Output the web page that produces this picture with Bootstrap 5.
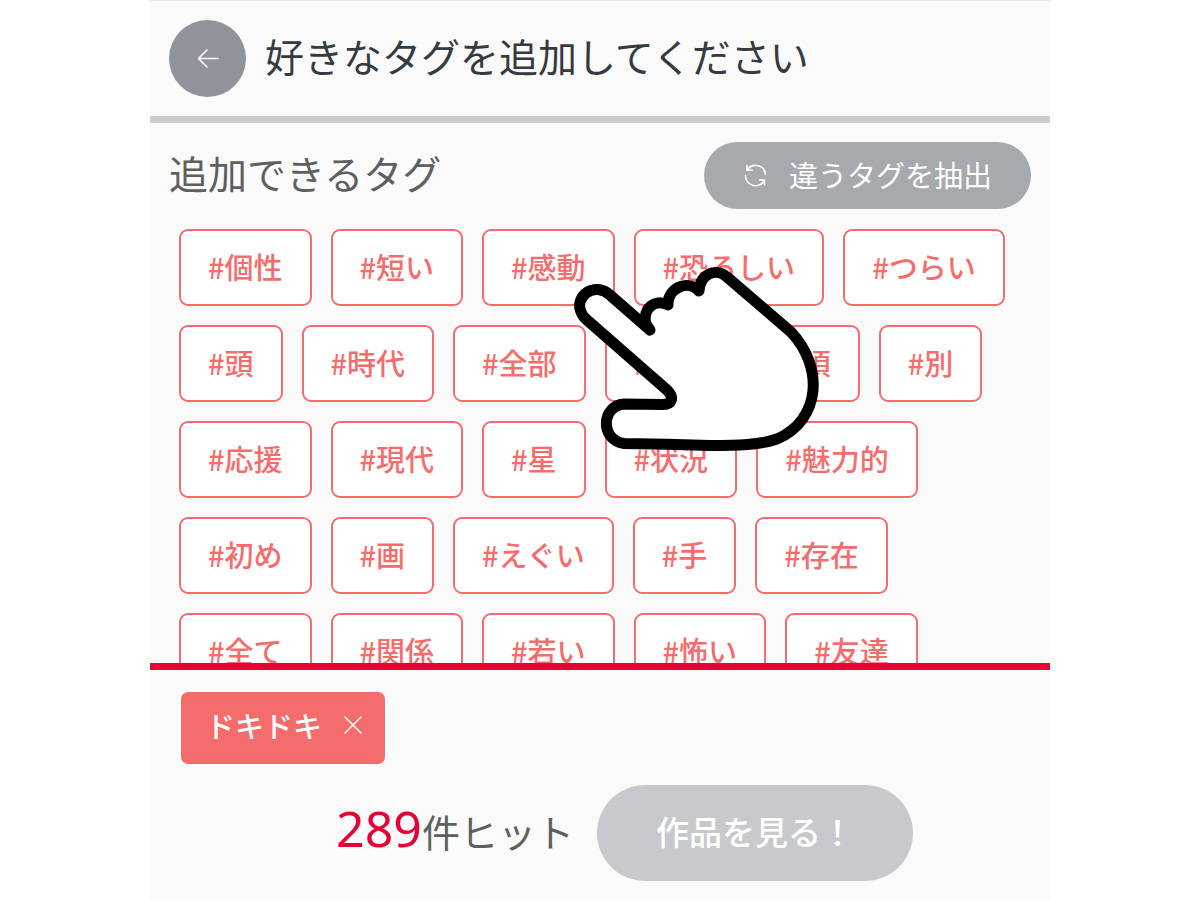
<!DOCTYPE html>
<html lang="ja">
<head>
<meta charset="utf-8">
<meta name="viewport" content="width=device-width, initial-scale=1">
<title>タグ検索</title>
<link href="https://cdn.jsdelivr.net/npm/bootstrap@5.3.0/dist/css/bootstrap.min.css" rel="stylesheet">
<style>
body { font-family: "Noto Sans CJK JP", sans-serif; background: #fff; color: #5f5f5f; }
.app-shell { max-width: 900px; background: #fafafa; }
.app-header { border-top: 1px solid #e8e8e8; border-bottom: 7px solid #ccc; padding: 19px; gap: 19px; }
.back-btn { width: 77px; height: 77px; background: #909399; color: #fff; }
.app-title, .section-title { font-size: 39px; line-height: 56px; font-weight: 400; padding-bottom: 8px; }
.app-title { color: #343a40; }
.tag-area { padding: 19px 19px 0; min-height: 0; }
.shuffle-btn { height: 67px; padding: 0 39px; gap: 21px; background: #a6a9ad; color: #fff; font-size: 29px; line-height: 40px; }
.shuffle-btn span, .picked-tag span { padding-bottom: 4px; }
.tag-list { gap: 19px; padding: 20px 10px 0; }
.tag-btn { height: 77px; padding: 0 27px 4px; border: 2px solid #f56c6c; border-radius: 9px; background: #fff; color: #f56c6c; font-size: 29px; line-height: 40px; font-weight: 500; }
.result-bar { border-top: 7px solid #e60033; padding: 20px 29px 19px; }
.picked-tag { height: 76px; padding: 0 22px 2px 25px; gap: 21px; border: 2px solid #fff; border-radius: 9px; background: #f56c6c; color: #fff; font-size: 29px; line-height: 40px; font-weight: 500; }
.picked-tag svg { margin-bottom: 4px; }
.result-row { gap: 23px; margin-top: 19px; padding-left: 49px; }
.hit-text { font-size: 38px; line-height: 56px; padding-bottom: 8px; }
.hit-count { font-family: "Noto Sans", sans-serif; font-size: 50px; color: #e60033; }
.view-btn { height: 96px; padding: 0 59px 4px; background: #c8c9cc; color: #fff; font-size: 33px; line-height: 48px; font-weight: 500; }
.pointer-hand { left: 420px; top: 260px; pointer-events: none; }
</style>
</head>
<body>
<div class="app-shell container-fluid p-0 vh-100 d-flex flex-column position-relative overflow-hidden">
  <header class="app-header d-flex align-items-center flex-shrink-0">
    <button type="button" class="back-btn btn border-0 rounded-circle p-0 d-flex align-items-center justify-content-center" aria-label="戻る">
      <svg width="24" height="24" viewBox="0 0 24 24" fill="none" stroke="currentColor" stroke-width="1.6" stroke-linecap="round" stroke-linejoin="round"><path d="M22 11.5H2.500M11 3 2.500 11.500 11 20"/></svg>
    </button>
    <h1 class="app-title m-0">好きなタグを追加してください</h1>
  </header>

  <main class="tag-area flex-fill overflow-hidden">
    <div class="d-flex align-items-center justify-content-between">
      <h2 class="section-title m-0">追加できるタグ</h2>
      <button type="button" class="shuffle-btn btn border-0 rounded-pill d-flex align-items-center">
        <svg width="25" height="25" viewBox="0 0 25 25" fill="none" stroke="currentColor" stroke-width="1.6" stroke-linejoin="round" stroke-linecap="round"><path d="M4 2.500v4.800h5M4.500 6.500A10 10 0 0 1 22.500 11.500M21.500 21.800v-4.800h-5M21 18A10 10 0 0 1 2.500 12.500"/></svg>
        <span>違うタグを抽出</span>
      </button>
    </div>
    <div class="tag-list d-flex flex-wrap">
      <button type="button" class="tag-btn btn">#個性</button>
      <button type="button" class="tag-btn btn">#短い</button>
      <button type="button" class="tag-btn btn">#感動</button>
      <button type="button" class="tag-btn btn">#恐ろしい</button>
      <button type="button" class="tag-btn btn">#つらい</button>
      <button type="button" class="tag-btn btn">#頭</button>
      <button type="button" class="tag-btn btn">#時代</button>
      <button type="button" class="tag-btn btn">#全部</button>
      <button type="button" class="tag-btn btn">#最高</button>
      <button type="button" class="tag-btn btn">#頃</button>
      <button type="button" class="tag-btn btn">#別</button>
      <button type="button" class="tag-btn btn">#応援</button>
      <button type="button" class="tag-btn btn">#現代</button>
      <button type="button" class="tag-btn btn">#星</button>
      <button type="button" class="tag-btn btn">#状況</button>
      <button type="button" class="tag-btn btn">#魅力的</button>
      <button type="button" class="tag-btn btn">#初め</button>
      <button type="button" class="tag-btn btn">#画</button>
      <button type="button" class="tag-btn btn">#えぐい</button>
      <button type="button" class="tag-btn btn">#手</button>
      <button type="button" class="tag-btn btn">#存在</button>
      <button type="button" class="tag-btn btn">#全て</button>
      <button type="button" class="tag-btn btn">#関係</button>
      <button type="button" class="tag-btn btn">#若い</button>
      <button type="button" class="tag-btn btn">#怖い</button>
      <button type="button" class="tag-btn btn">#友達</button>
    </div>
  </main>

  <footer class="result-bar flex-shrink-0">
    <button type="button" class="picked-tag btn d-inline-flex align-items-center">
      <span>ドキドキ</span>
      <svg width="20" height="20" viewBox="0 0 20 20" fill="none" stroke="currentColor" stroke-width="1.5" stroke-linecap="round"><path d="m2 2 16 16M18 2 2 18"/></svg>
    </button>
    <div class="result-row d-flex align-items-center justify-content-center">
      <p class="hit-text m-0"><span class="hit-count">289</span>件ヒット</p>
      <button type="button" class="view-btn btn border-0 rounded-pill">作品を見る！</button>
    </div>
  </footer>

  <svg class="pointer-hand position-absolute" width="252" height="196" viewBox="570 260 252 196" fill="#fff" stroke="#000" stroke-width="11" stroke-linecap="round" stroke-linejoin="round" aria-hidden="true">
    <path d="M650 330 610 295C595 281 574 296 581 312Q583 317 587 320L667 390C675 398 672 405 662 404.500L624 404C601 406 600 440 624 443.500Q667 444 710 445.500C737 445.500 760 445 777 439C821 420 824 367 791 332L727 277C716 267 700 274 699 291C686 278 667 290 668 305C655 298 642 309 646 324Z"/>
  </svg>
</div>
<script src="https://cdn.jsdelivr.net/npm/bootstrap@5.3.0/dist/js/bootstrap.bundle.min.js"></script>
</body>
</html>
